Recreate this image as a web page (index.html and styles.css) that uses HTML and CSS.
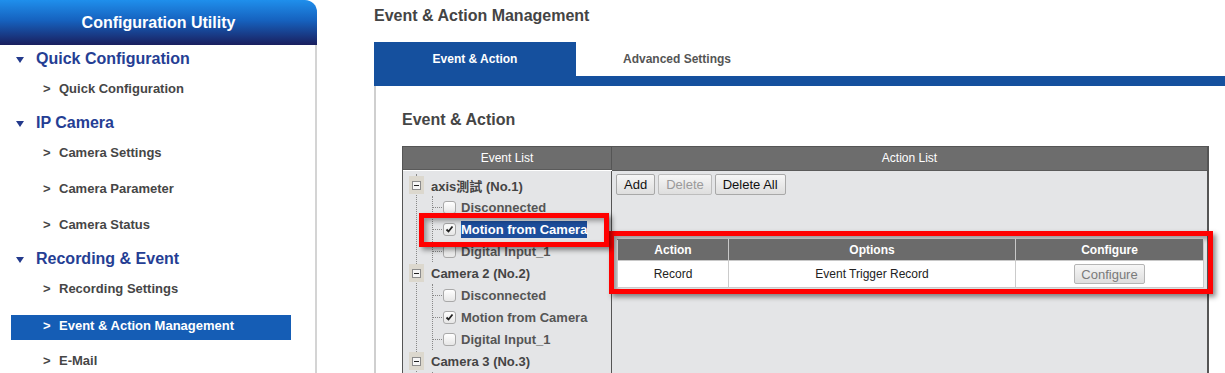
FILE: index.html
```html
<!DOCTYPE html>
<html lang="en">
<head>
  <meta charset="UTF-8" />
  <meta name="viewport" content="width=device-width, initial-scale=1.0"/>
  <title>Event &amp; Action Management</title>
  <link rel="stylesheet" href="styles.css">
</head>
<body>
  <div class="page">
    <aside class="sidebar">
      <div class="sidebar-head">Configuration Utility</div>
      <nav class="menu">
        <div class="menu-group">
          <div class="group-title"><span class="caret"></span>Quick Configuration</div>
          <ul class="sub-list">
            <li class="sub-item"><span class="chev">&gt;</span>Quick Configuration</li>
          </ul>
        </div>
        <div class="menu-group">
          <div class="group-title"><span class="caret"></span>IP Camera</div>
          <ul class="sub-list">
            <li class="sub-item"><span class="chev">&gt;</span>Camera Settings</li>
            <li class="sub-item"><span class="chev">&gt;</span>Camera Parameter</li>
            <li class="sub-item"><span class="chev">&gt;</span>Camera Status</li>
          </ul>
        </div>
        <div class="menu-group">
          <div class="group-title"><span class="caret"></span>Recording &amp; Event</div>
          <ul class="sub-list">
            <li class="sub-item"><span class="chev">&gt;</span>Recording Settings</li>
            <li class="sub-item active"><span class="chev">&gt;</span>Event &amp; Action Management</li>
            <li class="sub-item"><span class="chev">&gt;</span>E-Mail</li>
          </ul>
        </div>
      </nav>
    </aside>

    <main class="main">
      <h1 class="page-title">Event &amp; Action Management</h1>
      <div class="tabs">
        <div class="tab active">Event &amp; Action</div>
        <div class="tab">Advanced Settings</div>
      </div>
      <div class="tab-line"></div>

      <section class="panel">
        <h2 class="panel-title">Event &amp; Action</h2>

        <div class="ea-grid">
          <div class="ea-head ea-left">Event List</div>
          <div class="ea-head">Action List</div>

          <div class="ea-cell ea-left">
            <div class="tree">
              <div class="node">
                <div class="node-head"><span class="node-box"><span class="minus"></span></span>axis測試 (No.1)</div>
                <div class="children">
                  <div class="leaf"><span class="check"></span><span class="leaf-label">Disconnected</span></div>
                  <div class="leaf marked">
                    <span class="check"><svg viewBox="0 0 11 11" width="11" height="11"><path d="M2.5 5.5 L4.5 7.5 L8.5 2.5" stroke="#222" stroke-width="1.8" fill="none"/></svg></span>
                    <span class="leaf-label selected">Motion from Camera</span>
                    <span class="mark"></span>
                  </div>
                  <div class="leaf"><span class="check"></span><span class="leaf-label">Digital Input_1</span></div>
                </div>
              </div>
              <div class="node">
                <div class="node-head"><span class="node-box"><span class="minus"></span></span>Camera 2 (No.2)</div>
                <div class="children">
                  <div class="leaf"><span class="check"></span><span class="leaf-label">Disconnected</span></div>
                  <div class="leaf">
                    <span class="check"><svg viewBox="0 0 11 11" width="11" height="11"><path d="M2.5 5.5 L4.5 7.5 L8.5 2.5" stroke="#222" stroke-width="1.8" fill="none"/></svg></span>
                    <span class="leaf-label">Motion from Camera</span>
                  </div>
                  <div class="leaf"><span class="check"></span><span class="leaf-label">Digital Input_1</span></div>
                </div>
              </div>
              <div class="node">
                <div class="node-head"><span class="node-box"><span class="minus"></span></span>Camera 3 (No.3)</div>
                <div class="children">
                  <div class="leaf"><span class="check"></span><span class="leaf-label">Disconnected</span></div>
                  <div class="leaf"><span class="check"></span><span class="leaf-label">Motion from Camera</span></div>
                  <div class="leaf"><span class="check"></span><span class="leaf-label">Digital Input_1</span></div>
                </div>
              </div>
            </div>
          </div>

          <div class="ea-cell">
            <div class="btn-row">
              <button class="btn">Add</button>
              <button class="btn" disabled>Delete</button>
              <button class="btn">Delete All</button>
            </div>
            <div class="action-frame">
              <table class="action-table">
                <colgroup>
                  <col style="width: 111px">
                  <col style="width: 287px">
                  <col style="width: 188px">
                </colgroup>
                <thead>
                  <tr><th>Action</th><th>Options</th><th>Configure</th></tr>
                </thead>
                <tbody>
                  <tr>
                    <td>Record</td>
                    <td>Event Trigger Record</td>
                    <td><button class="btn btn-config">Configure</button></td>
                  </tr>
                </tbody>
              </table>
            </div>
          </div>
        </div>
      </section>
    </main>
  </div>
</body>
</html>
```

FILE: styles.css
```css
/* Base */
html, body {
  margin: 0;
  padding: 0;
  height: 100%;
  overflow: hidden;
  background: #fff;
}

body {
  font-family: "Liberation Sans", Arial, "Noto Sans CJK TC", sans-serif;
  color: #444;
}

.page {
  display: flex;
  height: 100vh;
}

/* Sidebar */
.sidebar {
  width: 317px;
  flex-shrink: 0;
  display: flex;
  flex-direction: column;
}

.sidebar-head {
  height: 45px;
  line-height: 45px;
  text-align: center;
  color: #fff;
  font-size: 16px;
  font-weight: bold;
  border-radius: 0 12px 0 0;
  background: linear-gradient(180deg, #1f8fec 0%, #1662bf 45%, #1a1f5e 100%);
}

.menu {
  flex: 1;
  border-right: 2px solid #d4d4d4;
}

.group-title {
  height: 28px;
  line-height: 28px;
  padding-left: 16px;
  font-size: 16px;
  font-weight: bold;
  color: #253e94;
  display: flex;
  align-items: center;
}

.caret {
  width: 0;
  height: 0;
  border-left: 4px solid transparent;
  border-right: 4px solid transparent;
  border-top: 6px solid #233a8c;
  margin: 2px 12px 0 0;
}

.sub-list {
  list-style: none;
  margin: 0;
  padding: 3px 0 7px;
  display: flex;
  flex-direction: column;
  gap: 10px;
}

.sub-item {
  height: 26px;
  line-height: 26px;
  width: 280px;
  margin-left: 11px;
  padding-left: 32px;
  box-sizing: border-box;
  font-size: 13px;
  font-weight: bold;
  color: #464646;
}

.sub-item .chev {
  display: inline-block;
  width: 16px;
}

.sub-item.active {
  height: 25px;
  line-height: 21px;
  margin: 3px 0 -2px 11px;
  background: #155db5;
  color: #fff;
}

/* Main area */
.main {
  flex: 1;
  padding-left: 57px;
  min-width: 0;
}

.page-title {
  margin: 0;
  padding-top: 6px;
  line-height: 20px;
  font-size: 16px;
  font-weight: bold;
  color: #444;
}

.tabs {
  display: flex;
  margin-top: 16px;
}

.tab {
  width: 202px;
  height: 34px;
  line-height: 34px;
  text-align: center;
  font-size: 12px;
  font-weight: bold;
  color: #555;
}

.tab.active {
  background: #15509e;
  color: #fff;
}

.tab-line {
  height: 10px;
  background: #15509e;
}

.panel {
  border-left: 2px solid #cfcfcf;
  padding: 24px 0 0 26px;
  min-height: 600px;
}

.panel-title {
  margin: 0 0 16px;
  line-height: 20px;
  font-size: 16px;
  font-weight: bold;
  color: #454545;
}

/* Event / action grid */
.ea-grid {
  width: 807px;
  display: grid;
  grid-template-columns: 209px minmax(0, 1fr);
  border: 1px solid #555;
  border-right-width: 2px;
  box-sizing: border-box;
}

.ea-head {
  height: 23px;
  line-height: 23px;
  background: #6d6d6d;
  color: #fff;
  font-size: 12px;
  text-align: center;
  border-bottom: 1px solid #5a5a5a;
}

.ea-left {
  border-right: 1px solid #555;
  box-sizing: border-box;
}

.ea-cell {
  background: #e4e5e7;
  padding: 3px 4px 40px;
  min-height: 300px;
}

.ea-cell.ea-left {
  padding: 3px 0 40px;
}

/* Tree */
.tree {
  margin-left: 13px;
  border-left: 1px dotted #888;
}

.node-head {
  display: flex;
  align-items: center;
  height: 22px;
  margin-left: -8px;
  font-size: 13px;
  font-weight: bold;
  color: #444;
}

.node-box {
  width: 15px;
  height: 18px;
  margin-right: 7px;
  background: #dcd8ce;
  display: flex;
  align-items: center;
  justify-content: center;
}

.minus {
  width: 9px;
  height: 9px;
  box-sizing: border-box;
  border: 1px solid #8c8c8c;
  background: linear-gradient(#222, #222) center / 5px 1px no-repeat, #f6f6f6;
}

.children {
  margin-left: 15px;
  border-left: 1px dotted #888;
}

.leaf {
  display: flex;
  align-items: center;
  height: 22px;
  font-size: 13px;
  font-weight: bold;
  color: #555;
}

.leaf::before {
  content: "";
  width: 9px;
  border-top: 1px dotted #888;
  margin-right: 1px;
}

.check {
  width: 13px;
  height: 13px;
  box-sizing: border-box;
  border: 1px solid #a9a9a9;
  border-radius: 3px;
  background: linear-gradient(#fff, #e6e6e6);
  margin-right: 5px;
  display: flex;
  align-items: center;
  justify-content: center;
}

.leaf-label.selected {
  background: #1d4e9c;
  color: #fff;
  line-height: 17px;
}

.leaf.marked {
  position: relative;
}

.mark {
  position: absolute;
  left: -14px;
  top: -5px;
  width: 190px;
  height: 34px;
  box-sizing: border-box;
  border: 5px solid #f00;
  box-shadow: 3px 3px 5px rgba(0, 0, 0, 0.45), inset 3px 3px 5px rgba(0, 0, 0, 0.35);
  pointer-events: none;
}

/* Buttons */
.btn-row {
  display: flex;
  gap: 3px;
}

.btn {
  height: 21px;
  padding: 0 7px;
  font-family: "Liberation Sans", Arial, sans-serif;
  font-size: 13px;
  color: #111;
  background: linear-gradient(#f6f6f6, #dedede);
  border: 1px solid #a8a8a8;
  border-radius: 2px;
}

.btn:disabled {
  color: #9a9a9a;
  border-color: #bdbdbd;
}

.btn-config {
  width: 71px;
  height: 20px;
  padding: 0;
  color: #7a7a7a;
  border-color: #b5b5b5;
}

/* Action list table */
.action-frame {
  width: 604px;
  box-sizing: border-box;
  margin: 36px 0 0 -7px;
  border: 5px solid #f00;
  padding: 3px 5px 1px 3px;
  box-shadow: 3px 3px 5px rgba(0, 0, 0, 0.45), inset 3px 3px 5px rgba(0, 0, 0, 0.35);
}

.action-table {
  width: 586px;
  border-collapse: collapse;
  table-layout: fixed;
  font-size: 12px;
}

.action-table th {
  height: 20px;
  padding: 0;
  background: #6b6b6b;
  color: #fff;
  font-weight: bold;
  border: 1px solid #c8c8c8;
  border-top-color: #6b6b6b;
}

.action-table td {
  height: 26px;
  padding: 0;
  background: #fff;
  color: #222;
  text-align: center;
  border: 1px solid #cbcbcb;
}
```
